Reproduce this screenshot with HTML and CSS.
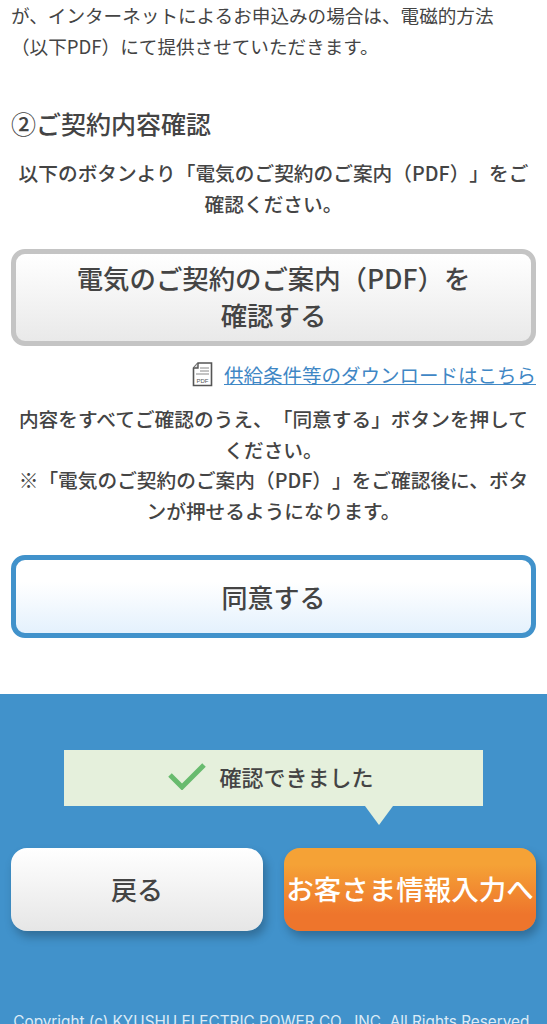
FILE: index.html
```html
<!DOCTYPE html>
<html lang="ja">
<head>
    <meta charset="UTF-8">
    <meta name="viewport" content="width=device-width, initial-scale=1.0">
    <title>ご契約内容確認</title>
    <link rel="stylesheet" href="styles.css">
</head>
<body>
    <div class="main">
        <p class="lead">が、インターネットによるお申込みの場合は、電磁的方法<br>（以下PDF）にて提供させていただきます。</p>

        <h2>②ご契約内容確認</h2>
        <p class="note first">以下のボタンより「電気のご契約のご案内（PDF）」をご<br>確認ください。</p>

        <button class="btn-pdf">電気のご契約のご案内（PDF）を<br>確認する</button>

        <div class="download">
            <svg class="pdf-icon" width="21" height="25" viewBox="0 0 21 25">
                <path d="M6 1H19.5V23.5H1.5V6Z" fill="#fff" stroke="#555" stroke-width="1.6"/>
                <path d="M6 1V6H1.5" fill="#ddd" stroke="#555" stroke-width="1.4"/>
                <path d="M8 6H17M8 9H17M4 12H17" stroke="#888" stroke-width="1"/>
                <text x="10.5" y="21" class="pdf-label">PDF</text>
            </svg>
            <a href="#">供給条件等のダウンロードはこちら</a>
        </div>

        <p class="note">内容をすべてご確認のうえ、「同意する」ボタンを押して<br>ください。<br>※「電気のご契約のご案内（PDF）」をご確認後に、ボタ<br>ンが押せるようになります。</p>

        <button class="btn-agree">同意する</button>
    </div>

    <div class="footer">
        <div class="balloon">
            <svg width="40" height="28" viewBox="0 0 40 28">
                <path d="M3 13L15 25L37 3" fill="none" stroke="#68bb6e" stroke-width="5"/>
            </svg>
            <span>確認できました</span>
        </div>
        <div class="nav">
            <button class="btn-back">戻る</button>
            <button class="btn-next">お客さま情報入力へ</button>
        </div>
        <p class="copyright">Copyright (c) KYUSHU ELECTRIC POWER CO., INC. All Rights Reserved.</p>
    </div>
</body>
</html>
```

FILE: styles.css
```css
:root {
    --blue: #4192cb;
    --text: #444;
}

* {
    box-sizing: border-box;
}

html, body {
    height: 1024px;
    overflow: hidden;
}

body {
    margin: 0;
    color: var(--text);
    font-family: "Noto Sans CJK JP", "Noto Sans", sans-serif;
    text-spacing-trim: space-all;
    background: #fff;
}

.main {
    display: flow-root;
    height: 694px;
    padding: 0 11px;
}

.lead {
    margin: -1px 0 0;
    font-size: 18.6px;
    line-height: 31px;
    white-space: nowrap;
}

h2 {
    margin: 44px 0 0;
    font-size: 25px;
    line-height: 36px;
    font-weight: 500;
}

.note {
    margin: 0;
    font-size: 19.7px;
    line-height: 30.5px;
    font-weight: 500;
    text-align: center;
    white-space: nowrap;
}

.note.first {
    margin-top: 17px;
}

button {
    display: block;
    width: 100%;
    padding: 0;
    color: var(--text);
    font-family: inherit;
    font-weight: 500;
}

.btn-pdf {
    height: 97px;
    margin-top: 30px;
    padding-bottom: 4px;
    font-size: 26.4px;
    line-height: 37px;
    border: 5px solid #c4c4c4;
    border-radius: 14px;
    background: linear-gradient(#fff, #e9e9e9);
}

.download {
    display: flex;
    justify-content: flex-end;
    align-items: center;
    gap: 11px;
    height: 28px;
    margin-top: 14px;
    font-size: 19.5px;
}

.download a {
    color: #3f87c5;
}

.pdf-label {
    font: 6px "Liberation Sans", sans-serif;
    fill: #555;
    text-anchor: middle;
}

.download + .note {
    margin-top: 16px;
}

.btn-agree {
    height: 83px;
    margin-top: 29px;
    font-size: 26px;
    border: 5px solid var(--blue);
    border-radius: 14px;
    background: linear-gradient(#fff 30%, #e4f1fd);
}

.footer {
    height: 330px;
    padding: 56px 11px 0;
    background: var(--blue);
}

.balloon {
    position: relative;
    display: flex;
    justify-content: center;
    align-items: center;
    gap: 12px;
    width: 419px;
    height: 56px;
    margin: 0 auto 42px;
    padding: 0 6px 4px 0;
    font-size: 22px;
    font-weight: 500;
    background: #e5f0dc;
}

.balloon::after {
    content: "";
    position: absolute;
    top: 100%;
    left: 301px;
    border-style: solid;
    border-width: 19px 14px 0;
    border-color: #e5f0dc transparent transparent;
}

.nav {
    display: flex;
    gap: 21px;
}

.nav button {
    flex: 1 1 0;
    height: 83px;
    padding-bottom: 3px;
    border: 0;
    border-radius: 16px;
    box-shadow: 3px 6px 10px rgba(0, 0, 0, 0.25);
}

.btn-back {
    font-size: 26px;
    background: linear-gradient(#fff, #e6e6e6);
}

.btn-next {
    font-size: 27.5px;
    color: #fff;
    white-space: nowrap;
    background: linear-gradient(#f5a236 20%, #ee752c 80%);
}

.copyright {
    margin: 81px -5px 0;
    font-family: Inter, sans-serif;
    font-size: 15.3px;
    line-height: 20px;
    color: #dcebf6;
    text-align: center;
    white-space: nowrap;
}
```
